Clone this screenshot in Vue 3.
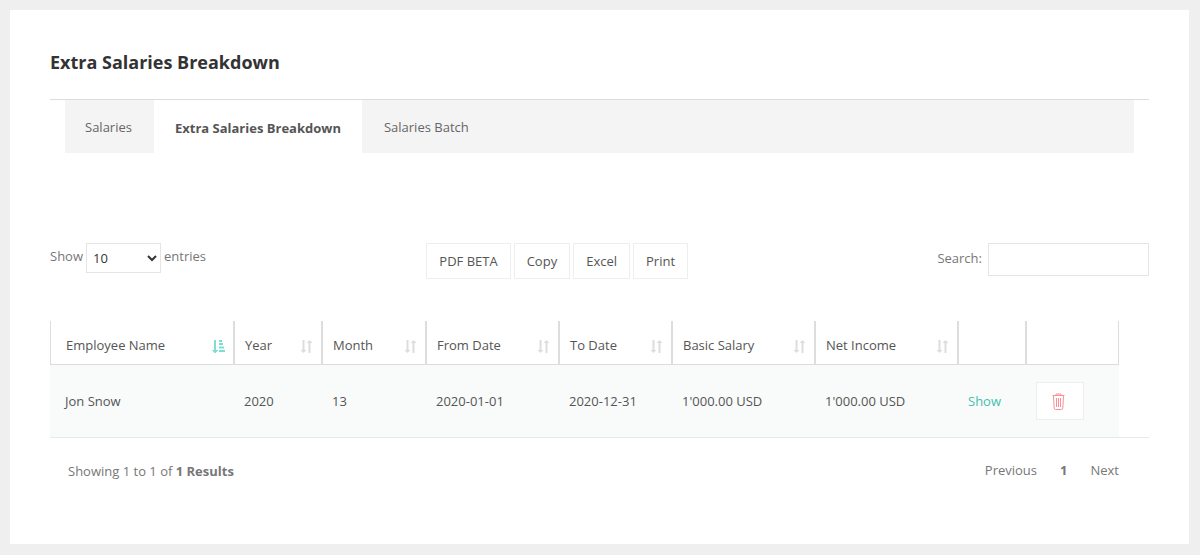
<script setup>
import { ref } from 'vue'

const tabs = ['Salaries', 'Extra Salaries Breakdown', 'Salaries Batch']
const activeTab = ref(1)
const pageSize = ref('10')
const search = ref('')
const exports = ['PDF BETA', 'Copy', 'Excel', 'Print']

const columns = [
  { key: 'name', label: 'Employee Name', sort: 'asc' },
  { key: 'year', label: 'Year', sort: 'none' },
  { key: 'month', label: 'Month', sort: 'none' },
  { key: 'from', label: 'From Date', sort: 'none' },
  { key: 'to', label: 'To Date', sort: 'none' },
  { key: 'basic', label: 'Basic Salary', sort: 'none' },
  { key: 'net', label: 'Net Income', sort: 'none' },
]

const rows = [
  {
    name: 'Jon Snow',
    year: '2020',
    month: '13',
    from: '2020-01-01',
    to: '2020-12-31',
    basic: "1'000.00 USD",
    net: "1'000.00 USD",
  },
]
</script>

<template>
  <main class="card">
    <h1 class="title">Extra Salaries Breakdown</h1>

    <nav class="tabs">
      <a
        v-for="(tab, i) in tabs"
        :key="tab"
        href="#"
        class="tab"
        :class="{ active: i === activeTab }"
        @click.prevent="activeTab = i"
      >{{ tab }}</a>
    </nav>

    <div class="toolbar">
      <label class="length">
        <span>Show</span>
        <select v-model="pageSize">
          <option>10</option>
          <option>25</option>
          <option>50</option>
        </select>
        <span>entries</span>
      </label>
      <div class="exports">
        <button v-for="e in exports" :key="e" type="button" class="btn">{{ e }}</button>
      </div>
      <label class="search">
        <span>Search:</span>
        <input v-model="search" type="text" />
      </label>
    </div>

    <div class="table-wrap">
      <table>
        <colgroup>
          <col class="w-name" />
          <col class="w-year" />
          <col class="w-month" />
          <col class="w-from" />
          <col class="w-to" />
          <col class="w-money" />
          <col class="w-money" />
          <col class="w-show" />
          <col class="w-delete" />
        </colgroup>
        <thead>
          <tr>
            <th v-for="c in columns" :key="c.key" scope="col">
              <div class="head">
                <span>{{ c.label }}</span>
                <svg v-if="c.sort === 'asc'" class="sort asc" width="14" height="13" viewBox="0 0 14 13" aria-hidden="true">
                  <path d="M2 0h2v10h2.500L3.500 13h-1L0 10h2zM7 0h3v2H7zM7 3h4v2H7zM7 6.500h5v2H7zM7 10h6v2H7z" />
                </svg>
                <svg v-else class="sort" width="14" height="13" viewBox="0 0 14 13" aria-hidden="true">
                  <path d="M2.500 0h2v10h2L3.500 13 .500 10h2zM8.500 13h2V3h2L9.500 0 6.500 3h2z" />
                </svg>
              </div>
            </th>
            <th></th>
            <th></th>
          </tr>
        </thead>
        <tbody>
          <tr v-for="r in rows" :key="r.name">
            <td v-for="c in columns" :key="c.key">{{ r[c.key] }}</td>
            <td><a href="#" class="show" @click.prevent>Show</a></td>
            <td>
              <button type="button" class="delete" aria-label="Delete">
                <svg width="13" height="17" viewBox="0 0 13 17" fill="none" stroke="#fb8f98" aria-hidden="true">
                  <path d="M.500 2.500h12M4 2.500v-1.500h5v1.500M1.500 3l.700 12q.100 1.500 1.300 1.500h6q1.200 0 1.300-1.500l.700-12M4.500 5v9M6.500 5v9M8.500 5v9" />
                </svg>
              </button>
            </td>
          </tr>
        </tbody>
      </table>
    </div>

    <footer class="footer">
      <p class="info">Showing 1 to 1 of <b>1 Results</b></p>
      <nav class="pager">
        <a href="#" @click.prevent>Previous</a>
        <a href="#" class="current" @click.prevent>1</a>
        <a href="#" @click.prevent>Next</a>
      </nav>
    </footer>
  </main>
</template>

<style>
body {
  margin: 0;
  background: #efefef;
}
</style>

<style scoped>
.card {
  display: flow-root;
  box-sizing: border-box;
  margin: 10px 11px 11px 10px;
  padding: 40px 40px 64px;
  background: #fff;
  color: #777;
  font: 13px/18px "Open Sans", sans-serif;
}
.title {
  margin: 0;
  padding-bottom: 25px;
  border-bottom: 1px solid #ddd;
  color: #333;
  font-size: 18px;
  font-weight: 700;
  line-height: 24px;
}
.tabs {
  display: flex;
  margin: 0 15px;
  background: #f4f4f4;
}
.tab {
  box-sizing: border-box;
  height: 53px;
  padding: 18px 22px 0 20px;
  color: #666;
  text-decoration: none;
}
.tab:last-child {
  padding-left: 22px;
}
.tab.active {
  padding: 19px 21px 0;
  background: #fff;
  color: #555;
  font-weight: 700;
}
.toolbar {
  display: grid;
  grid-template-columns: repeat(3, 1fr);
  align-items: start;
  margin-top: 90px;
}
.length {
  display: flex;
  gap: 3px;
}
.length span {
  padding-top: 4px;
}
select,
input {
  box-sizing: border-box;
  border: 1px solid #e5e5e5;
  border-radius: 0;
  background: #fff;
  color: #333;
  font: inherit;
}
select {
  width: 75px;
  height: 30px;
  padding: 0 2px;
}
.exports {
  display: flex;
  gap: 3px;
  padding-left: 10px;
}
.btn {
  height: 36px;
  padding: 0 12px;
  border: 1px solid #eee;
  background: #fff;
  color: #555;
  font: inherit;
}
.search {
  display: flex;
  justify-content: flex-end;
  gap: 6px;
}
.search span {
  padding-top: 6px;
}
input {
  width: 161px;
  height: 33px;
  padding: 0 8px;
}
.table-wrap {
  margin-top: 42px;
  border-bottom: 1px solid #e7eaea;
}
table {
  width: calc(100% - 30px);
  table-layout: fixed;
  border-collapse: separate;
  border-spacing: 0;
  color: #555;
}
.w-name { width: 184px; }
.w-year { width: 88px; }
.w-month { width: 104px; }
.w-from { width: 133px; }
.w-to { width: 113px; }
.w-money { width: 143px; }
.w-show { width: 68px; }
.w-delete { width: 93px; }
th {
  box-sizing: border-box;
  height: 44px;
  padding: 15px 7px 10px 10px;
  border: solid #ddd;
  border-width: 0 1px 1px;
  font-weight: 400;
  text-align: left;
  vertical-align: top;
}
th:first-child {
  padding-left: 15px;
}
.head {
  display: flex;
  justify-content: space-between;
  white-space: nowrap;
}
.sort {
  flex: none;
  margin-top: 4px;
  fill: #ddd;
}
.sort.asc {
  fill: #7fded2;
}
td {
  box-sizing: border-box;
  height: 72px;
  padding: 0 10px;
  background: #f9fbfa;
}
td:first-child {
  padding-left: 15px;
}
.show {
  color: #45bfae;
  text-decoration: none;
}
.delete {
  display: flex;
  align-items: center;
  justify-content: center;
  width: 48px;
  height: 38px;
  padding: 0 4px 0 0;
  border: 1px solid #eee;
  background: #fff;
}
.footer {
  display: flex;
  justify-content: space-between;
  margin: 23px 30px 0 18px;
}
.info {
  margin: 0;
  padding-top: 1px;
}
.pager {
  display: flex;
  gap: 23px;
}
.pager a {
  color: #777;
  text-decoration: none;
}
.pager .current {
  font-weight: 700;
}
</style>
